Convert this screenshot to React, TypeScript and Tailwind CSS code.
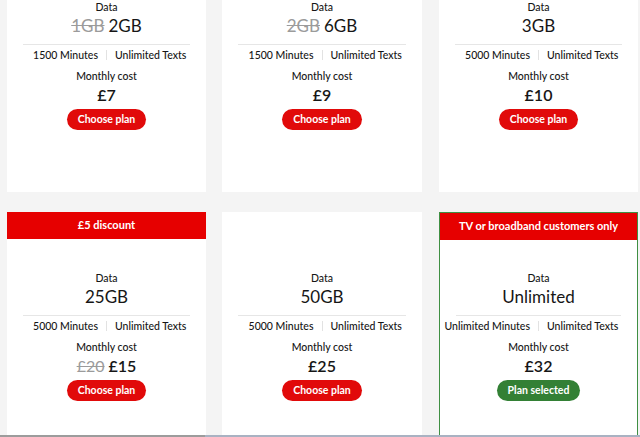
import React from 'react';

type Plan = {
  id: number;
  banner?: string;
  oldData?: string;
  data: string;
  minutes: string;
  oldPrice?: string;
  price: string;
  selected?: boolean;
};

const plans: Plan[] = [
  { id: 1, oldData: '1GB', data: '2GB', minutes: '1500 Minutes', price: '£7' },
  { id: 2, oldData: '2GB', data: '6GB', minutes: '1500 Minutes', price: '£9' },
  { id: 3, data: '3GB', minutes: '5000 Minutes', price: '£10' },
  { id: 4, banner: '£5 discount', data: '25GB', minutes: '5000 Minutes', oldPrice: '£20', price: '£15' },
  { id: 5, data: '50GB', minutes: '5000 Minutes', price: '£25' },
  {
    id: 6,
    banner: 'TV or broadband customers only',
    data: 'Unlimited',
    minutes: 'Unlimited Minutes',
    price: '£32',
    selected: true,
  },
];

const PlanCard: React.FC<{ plan: Plan }> = ({ plan }) => {
  return (
    <div
      className={`h-[251px] bg-white flex flex-col ${
        plan.selected ? 'border border-[#3f8f43]' : ''
      }`}
    >
      <div
        className={`h-[27px] shrink-0 flex items-center justify-center text-[11px] font-bold text-white ${
          plan.banner ? 'bg-[#e60000]' : ''
        }`}
      >
        {plan.banner}
      </div>
      <div className={`flex flex-col items-center ${plan.selected ? 'pt-[31px]' : 'pt-[32px]'} text-[#161616]`}>
        <div className="h-[14px] leading-[14px] text-[10.5px] font-medium">Data</div>
        <div className="h-[24px] leading-[24px] text-[17px]">
          {plan.oldData && (
            <span className="text-[#9b9b9b] line-through mr-[4px]">{plan.oldData}</span>
          )}
          {plan.data}
        </div>
        <div className="mt-[6px] h-px w-[calc(100%-32px)] bg-[#e6e6e6]" />
        <div className="mt-[3px] w-full grid grid-cols-[1fr_auto_1fr] items-center h-[14px] text-[10.5px] font-medium leading-[14px] whitespace-nowrap">
          <span className="text-right pr-[8px]">{plan.minutes}</span>
          <span className="w-px h-[10px] bg-[#e2e2e2]" />
          <span className="text-left pl-[8px]">Unlimited Texts</span>
        </div>
        <div className="mt-[7px] h-[14px] leading-[14px] text-[10.5px] font-medium">Monthly cost</div>
        <div className="mt-px h-[22px] leading-[22px] text-[16px] font-semibold">
          {plan.oldPrice && (
            <span className="text-[#9b9b9b] font-normal line-through mr-[4px]">{plan.oldPrice}</span>
          )}
          {plan.price}
        </div>
        <button
          className={`mt-[3px] h-[21px] px-[11px] rounded-full text-white text-[10.5px] font-bold leading-[21px] ${
            plan.selected ? 'bg-[#338035]' : 'bg-[#e10a0a]'
          }`}
        >
          {plan.selected ? 'Plan selected' : 'Choose plan'}
        </button>
      </div>
    </div>
  );
};

const App: React.FC = () => {
  return (
    <div
      className="h-[437px] w-[640px] overflow-hidden bg-[#f4f4f4] flex flex-col"
      style={{ fontFamily: 'Lato, "Noto Sans", sans-serif' }}
    >
      <div className="flex-1 overflow-hidden">
        <div className="-mt-[59px] pl-[7px] grid grid-cols-[199px_200px_200px] gap-x-[16px] gap-y-[20px]">
          {plans.map((plan) => (
            <div key={plan.id} className={plan.id % 3 === 0 ? 'ml-px' : ''}>
              <PlanCard plan={plan} />
            </div>
          ))}
        </div>
      </div>
      <div className="h-[2px] shrink-0 flex">
        <div className="w-[205px] bg-[#9c9c9c]" />
        <div className="flex-1 bg-[#a9b2c2]" />
      </div>
    </div>
  );
};

export default App;
